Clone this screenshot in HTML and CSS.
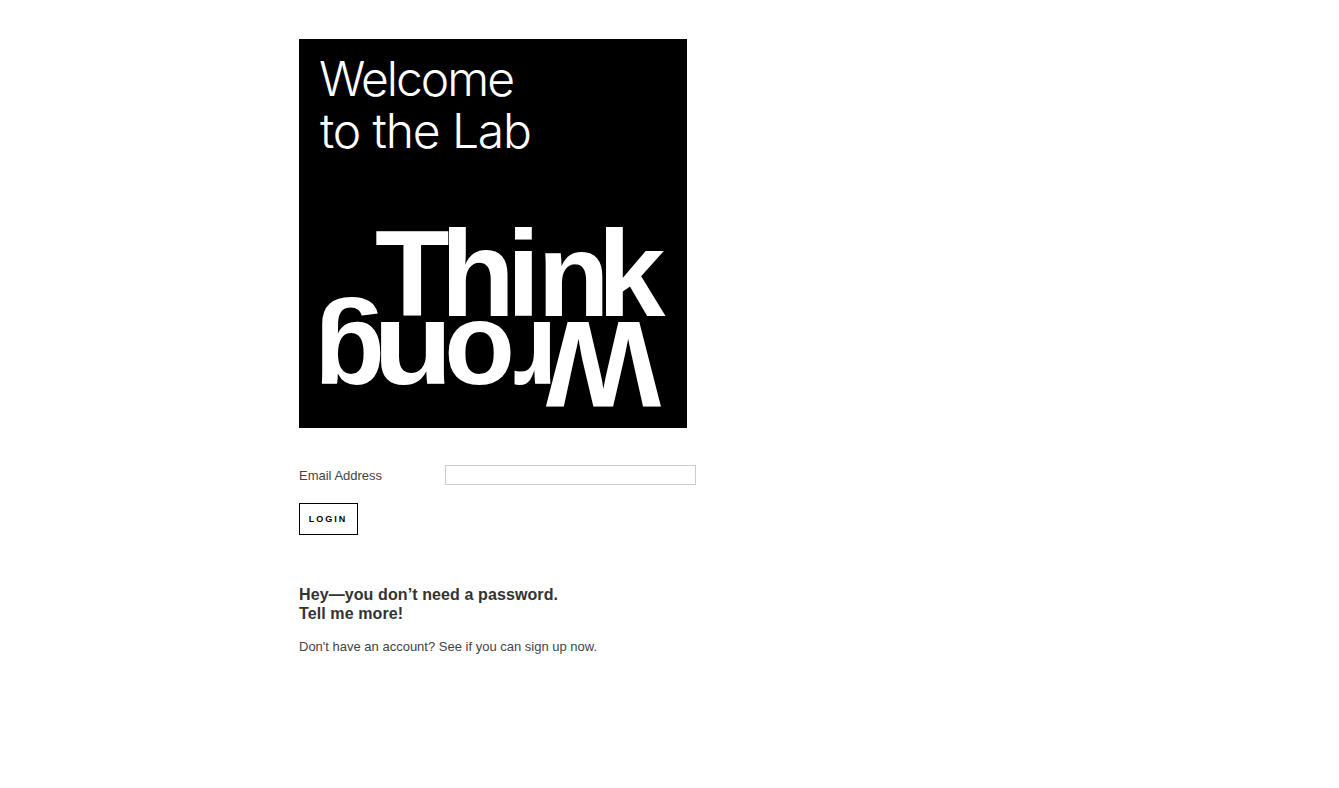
FILE: index.html
```html
<!DOCTYPE html>
<html lang="en">
<head>
    <meta charset="UTF-8">
    <meta name="viewport" content="width=device-width, initial-scale=1.0">
    <title>Welcome to the Lab</title>
    <link rel="stylesheet" href="styles.css">
</head>
<body>
    <div class="content">
        <svg class="hero" viewBox="0 0 388 389" role="img" aria-label="Welcome to the Lab. Think Wrong.">
            <rect width="388" height="389" fill="#000"/>
            <text class="hero-light" x="20" y="57" textLength="196">Welcome</text>
            <text class="hero-light" x="21" y="108.5" textLength="212">to the Lab</text>
            <text class="hero-bold" y="277"><tspan x="76 141.5 207.5">Thi</tspan><tspan class="hero-small" x="238.5">n</tspan><tspan x="298.5">k</tspan></text>
            <text class="hero-wrong" y="283" transform="rotate(180 362 283)"><tspan class="hero-cap" x="362">W</tspan><tspan x="465 508">ro</tspan><tspan x="570" textLength="80" lengthAdjust="spacingAndGlyphs">n</tspan><tspan x="638">g</tspan></text>
        </svg>
        <form class="login-form">
            <div class="field">
                <label for="email">Email Address</label>
                <input type="text" id="email">
            </div>
            <button type="button" class="login-btn">LOGIN</button>
        </form>
        <h2 class="more">Hey—you don’t need a password.<br>Tell me more!</h2>
        <p class="signup">Don't have an account? See if you can sign up now.</p>
    </div>
</body>
</html>
```

FILE: styles.css
```css
body {
    margin: 0;
    background: #fff;
    color: #333;
    font-family: "Liberation Sans", Arial, sans-serif;
}
.content {
    width: 400px;
    margin-left: 299px;
    padding-top: 39px;
}
.hero {
    display: block;
    width: 388px;
    height: 389px;
}
.hero-light {
    fill: #fff;
    font-family: Inter, "Liberation Sans", sans-serif;
    font-size: 48px;
    font-weight: 300;
}
.hero-bold {
    fill: #fff;
    font-family: "Liberation Sans", Arial, sans-serif;
    font-size: 122px;
    font-weight: 700;
}
.hero-small {
    font-size: 118px;
}
.hero-wrong {
    fill: #fff;
    font-family: "Liberation Sans", Arial, sans-serif;
    font-size: 116px;
    font-weight: 700;
}
.hero-cap {
    font-size: 122px;
}
.login-form {
    margin-top: 37px;
}
.field {
    display: flex;
    align-items: center;
    height: 20px;
}
.field label {
    width: 146px;
    font-size: 13px;
    color: #444;
}
.field input {
    box-sizing: border-box;
    width: 251px;
    height: 20px;
    margin: 0;
    padding: 0 4px;
    border: 1px solid #ccc;
    border-radius: 0;
    background: #fff;
}
.login-btn {
    display: block;
    box-sizing: border-box;
    width: 59px;
    height: 32px;
    margin-top: 18px;
    padding: 0 1px 1px 0;
    border: 1px solid #000;
    border-radius: 0;
    background: #fff;
    color: #000;
    font-family: "Liberation Sans", Arial, sans-serif;
    font-size: 9px;
    font-weight: 700;
    letter-spacing: 2px;
}
.more {
    margin: 50px 0 0;
    font-size: 16px;
    font-weight: 700;
    line-height: 19px;
    letter-spacing: 0.1px;
    color: #333;
}
.signup {
    margin: 15px 0 0;
    font-size: 13px;
    line-height: 18px;
    color: #444;
}
```
